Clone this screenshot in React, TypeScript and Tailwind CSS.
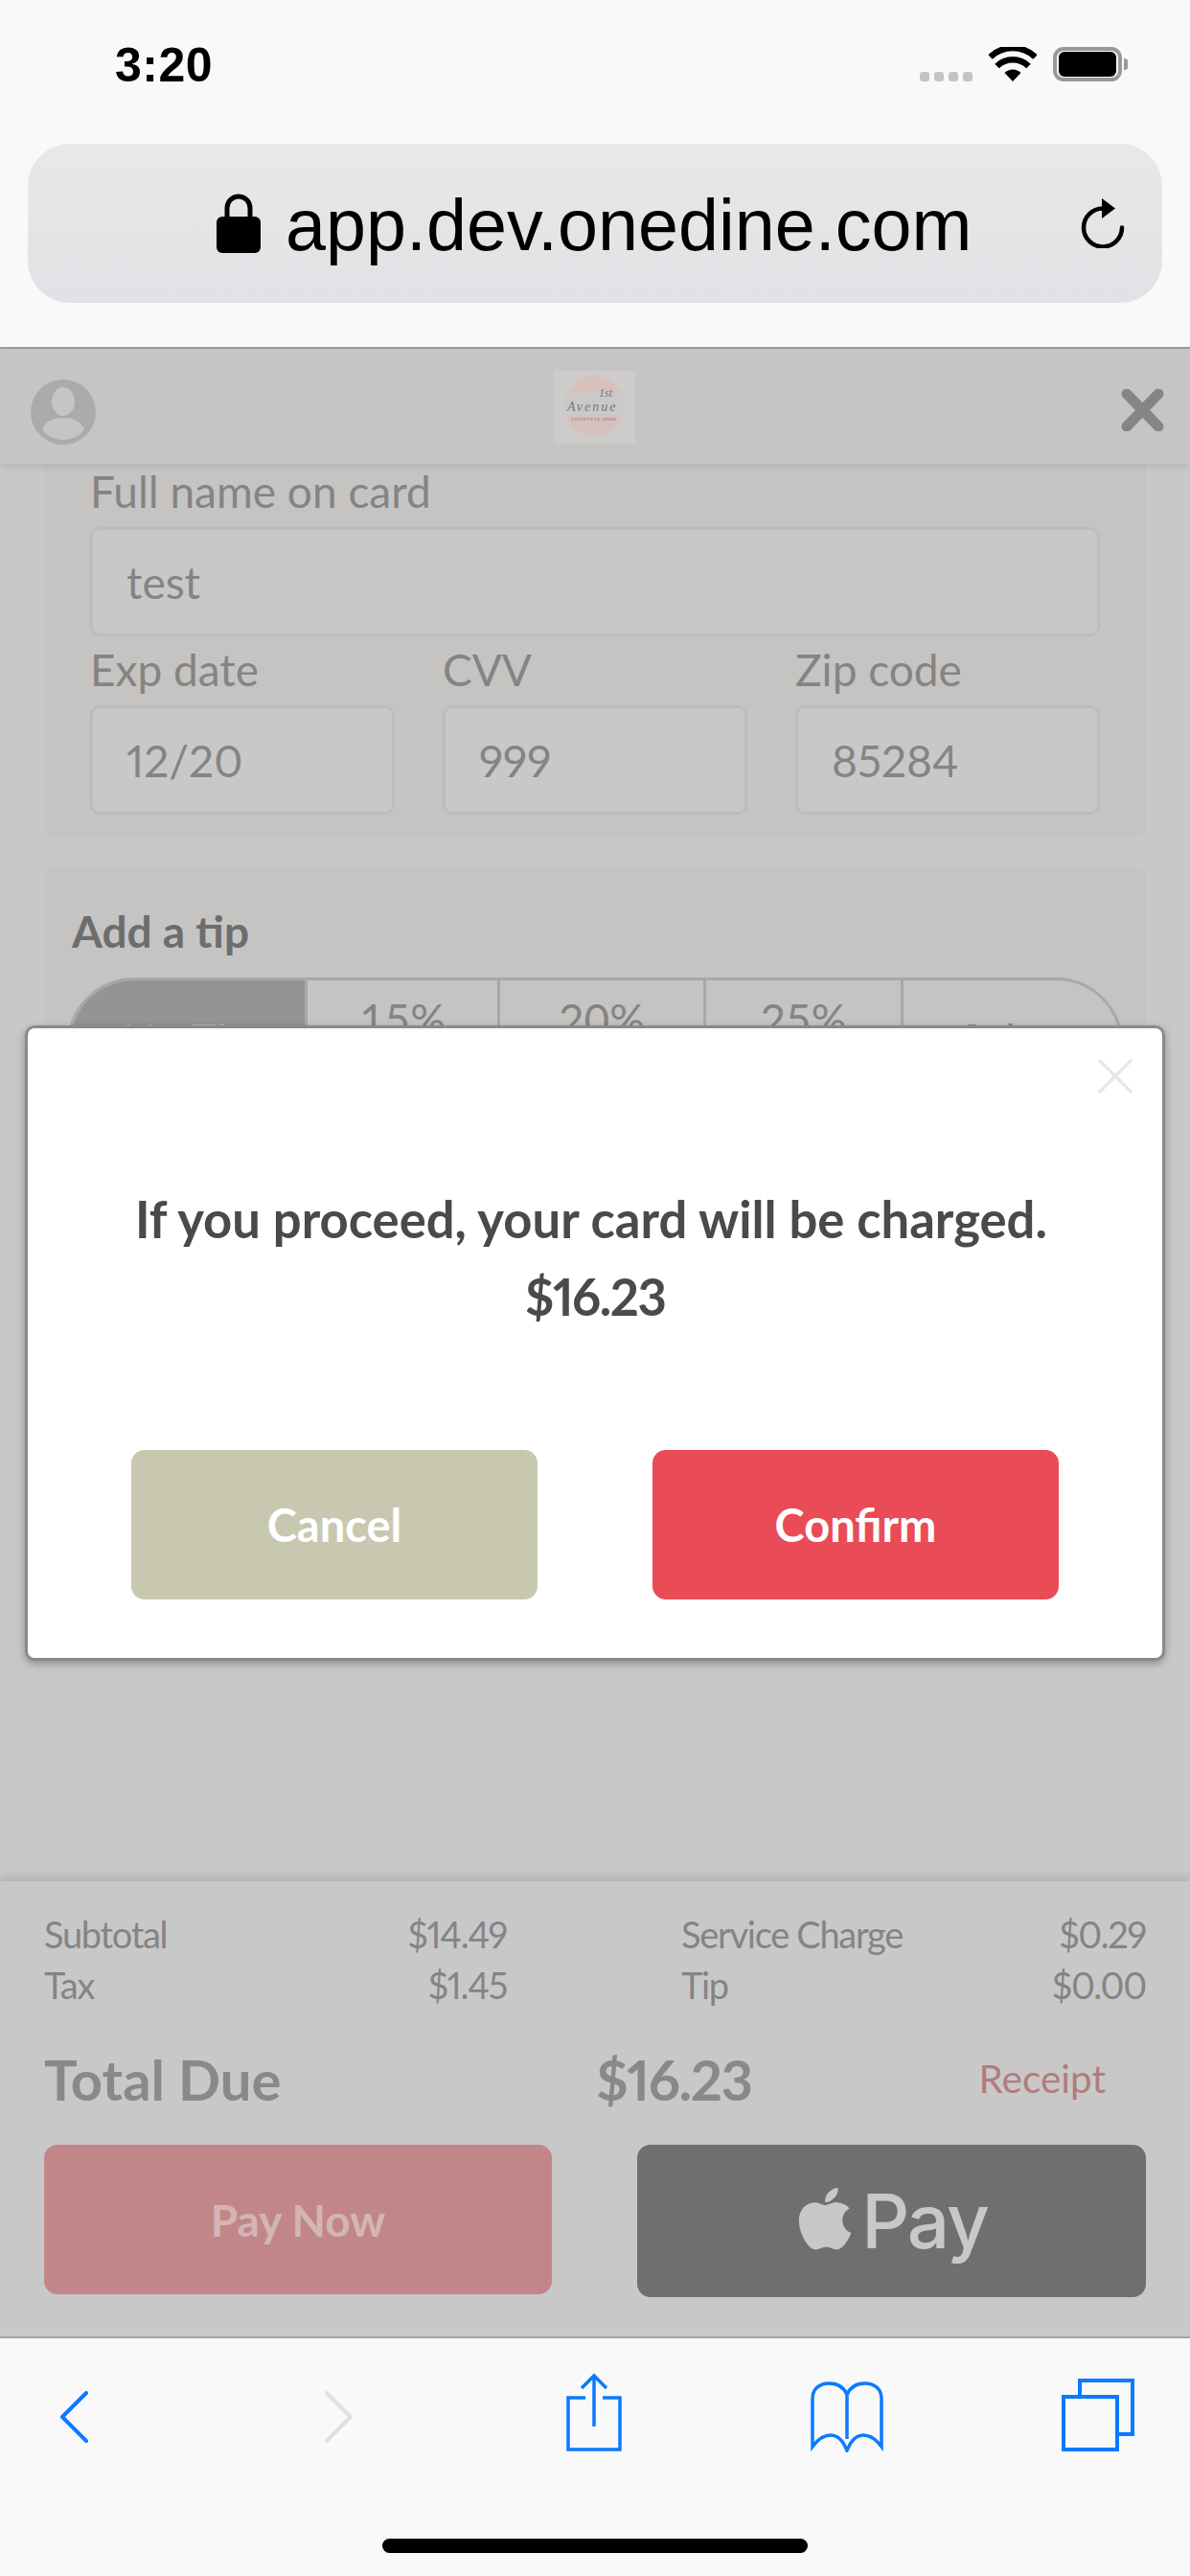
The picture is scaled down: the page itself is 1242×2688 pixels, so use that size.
import { FaApple } from "react-icons/fa";

const appFont = "font-['Lato','Open_Sans',sans-serif]";

function StatusIcons() {
  return (
    <div className="flex items-start">
      {/* signal */}
      <div className="mt-[26px] flex gap-[5px]">
        <div className="h-[10px] w-[10px] rounded-[3px] bg-[#c4c4c4]" />
        <div className="h-[10px] w-[10px] rounded-[3px] bg-[#c4c4c4]" />
        <div className="h-[10px] w-[10px] rounded-[3px] bg-[#c4c4c4]" />
        <div className="h-[10px] w-[10px] rounded-[3px] bg-[#c4c4c4]" />
      </div>
      <svg className="ml-[17px]" width="50" height="36" viewBox="0 0 50 36">
        <path d="M25 36 16.5 27a12 12 0 0 1 17 0Z" fill="#000" />
        <path d="M8.5 20a23.5 23.5 0 0 1 33 0" fill="none" stroke="#000" strokeWidth="6.5" />
        <path d="M1.5 11.5a34 34 0 0 1 47 0" fill="none" stroke="#000" strokeWidth="6.5" transform="translate(0 -1)" />
      </svg>
      <div className="ml-[17px] flex items-center">
        <div className="flex h-[36px] w-[72px] items-center justify-center rounded-[11px] border-[4px] border-[#999999]">
          <div className="h-[26px] w-[60px] rounded-[6px] bg-black" />
        </div>
        <div className="ml-[2px] h-[12px] w-[4px] rounded-r-[3px] bg-[#999999]" />
      </div>
    </div>
  );
}

function LockIcon() {
  return (
    <svg width="46" height="62" viewBox="0 0 46 62">
      <path d="M11 28V15a12 12 0 0 1 24 0v13" fill="none" stroke="#000" strokeWidth="5" />
      <rect x="0" y="24" width="46" height="38" rx="6" fill="#000" />
    </svg>
  );
}

function ReloadIcon() {
  return (
    <svg width="46" height="52" viewBox="0 0 46 52">
      <path d="M23 10.500a20 20 0 1 0 20 20" fill="none" stroke="#000" strokeWidth="4.500" strokeLinecap="round" />
      <path d="M22 0 36 10.500 22 21Z" fill="#000" />
    </svg>
  );
}

function SafariBar() {
  return (
    <div className="h-[364px] w-full shrink-0 border-b-2 border-[#9c9b99] bg-[#f9f9f9]">
      <div className="flex h-[150px] items-start justify-between pl-[120px] pr-[65px] pt-[49px]">
        <span className="font-['Liberation_Sans',sans-serif] text-[50px] leading-[38px] font-bold tracking-[0.5px] text-black">3:20</span>
        <StatusIcons />
      </div>
      <div className="mx-[29px] flex h-[166px] items-center rounded-[44px] bg-gradient-to-b from-[#e7e8e8] to-[#e1e2e5] pl-[197px] pr-[39px]">
        <LockIcon />
        <span className="ml-[26px] mt-[6px] font-['Liberation_Sans',sans-serif] text-[75.5px] leading-none text-black">app.dev.onedine.com</span>
        <div className="ml-auto">
          <ReloadIcon />
        </div>
      </div>
    </div>
  );
}

function AppHeader() {
  return (
    <div className="relative z-10 flex h-[120px] w-full shrink-0 items-center justify-between bg-[#c6c5c3] pl-[32px] pr-[27px] shadow-[0_4px_6px_rgba(0,0,0,0.08)]">
      <svg className="mt-[12px]" width="68" height="70" viewBox="0 0 68 70">
        <circle cx="34" cy="35" r="34" fill="#acabab" />
        <ellipse cx="34" cy="24" rx="12" ry="15" fill="#c6c5c3" />
        <path d="M12 53c4-9 12-12 22-12s18 3 22 12c-5 7-13 11-22 11S17 60 12 53Z" fill="#c6c5c3" />
      </svg>
      <svg width="85" height="76" viewBox="0 0 85 76" className="absolute left-[578px] top-[23px]">
        <rect width="85" height="76" fill="#cdcccb" />
        <circle cx="42" cy="37" r="31.500" fill="#d6c1bd" />
        <rect x="10.500" y="23" width="63" height="23" fill="#cbc9c8" />
        <text x="47" y="27" fontFamily="Liberation Serif" fontStyle="italic" fontSize="12" fill="#6f7983">1st</text>
        <text x="14" y="42" fontFamily="Liberation Serif" fontStyle="italic" fontSize="14" letterSpacing="2" fill="#6f7983">Avenue</text>
        <text x="42" y="52" textAnchor="middle" fontFamily="Liberation Serif" fontSize="5" letterSpacing="0.500" fill="#8f6e6a">LIFESTYLE SHOP</text>
      </svg>
      <svg className="mt-[8px]" width="45" height="44" viewBox="0 0 45 44">
        <path d="M6 5 39 39M39 5 6 39" fill="none" stroke="#868585" strokeWidth="11" strokeLinecap="round" />
      </svg>
    </div>
  );
}

function Field({ label, value }: { label: string; value: string }) {
  return (
    <div className="flex flex-col">
      <div className="h-[50px] text-[46px] leading-[50px] text-[#858484]">{label}</div>
      <div className="mt-[12px] flex h-[114px] items-center rounded-[10px] border-[3px] border-[#bdbcbd] bg-[#c9c8c9] pl-[35px] text-[46px] text-[#858484] proportional-nums">
        {value}
      </div>
    </div>
  );
}

function TipBar() {
  return (
    <div className="mt-[20px] flex h-[120px] overflow-hidden rounded-t-[70px] border-[3px] border-[#a9a8a8] text-center text-[46px] leading-[52px] text-[#858484]">
      <div className="w-[245px] bg-[#959494] pt-[36px] text-[#b5b4b4]">No Tip</div>
      <div className="w-[201px] border-l-[3px] border-[#a9a8a8] pt-[15px]">15%</div>
      <div className="w-[215px] border-l-[3px] border-[#a9a8a8] pt-[15px]">20%</div>
      <div className="w-[206px] border-l-[3px] border-[#a9a8a8] pt-[15px]">25%</div>
      <div className="flex-1 border-l-[3px] border-[#a9a8a8] pt-[36px]">Other</div>
    </div>
  );
}

function Page() {
  return (
    <div className="min-h-0 flex-1 overflow-hidden bg-[#c9c8c9] px-[46px]">
      <div className="rounded-b-[12px] bg-[#c5c4c2] px-[48px] pb-[24px] pt-[4px]">
        <Field label="Full name on card" value="test" />
        <div className="mt-[10px] grid grid-cols-3 gap-[50px]">
          <Field label="Exp date" value="12/20" />
          <Field label="CVV" value="999" />
          <Field label="Zip code" value="85284" />
        </div>
      </div>
      <div className="mt-[30px] h-[400px] rounded-[12px] bg-[#c5c4c2] px-[24px] pt-[40px]">
        <div className="pl-[5px] text-[46px] leading-[56px] font-bold text-[#6e6d6d]">Add a tip</div>
        <TipBar />
      </div>
    </div>
  );
}

function ConfirmModal() {
  return (
    <div className="absolute left-[26px] top-[1070px] z-20 h-[663px] w-[1190px] rounded-[10px] border-[3px] border-[#8a8a8a] bg-white shadow-[0_3px_8px_rgba(0,0,0,0.3)]">
      <svg className="absolute right-[31px] top-[32px]" width="36" height="36" viewBox="0 0 36 36">
        <path d="M2 2 34 34M34 2 2 34" fill="none" stroke="#e8e6ea" strokeWidth="3.500" strokeLinecap="round" />
      </svg>
      <div className="pt-[158px] text-center text-[52.6px] leading-[81px] font-bold text-[#4a4a4a]">
        <div className="pr-[8px]">If you proceed, your card will be charged.</div>
        <div className="tracking-[-1.5px] proportional-nums">$16.23</div>
      </div>
      <div className="mt-[120px] flex justify-between px-[108px]">
        <button className="h-[156px] w-[424px] rounded-[14px] bg-[#c8c8b0] text-[47px] font-bold text-white">Cancel</button>
        <button className="h-[156px] w-[424px] rounded-[14px] bg-[#e94b57] text-[47px] font-bold text-white">Confirm</button>
      </div>
    </div>
  );
}

function Amount({ label, value }: { label: string; value: string }) {
  return (
    <div className="flex h-[53px] items-center justify-between text-[38px] tracking-[-1.3px] text-[#858484] proportional-nums">
      <span>{label}</span>
      <span>{value}</span>
    </div>
  );
}

function Footer() {
  return (
    <div className="relative z-10 h-[475px] w-full shrink-0 bg-[#c9c8c9] px-[46px] pt-[29px] shadow-[0_-5px_8px_rgba(0,0,0,0.1)]">
      <div className="flex">
        <div className="w-[483px]">
          <Amount label="Subtotal" value="$14.49" />
          <Amount label="Tax" value="$1.45" />
        </div>
        <div className="ml-[182px] flex-1">
          <Amount label="Service Charge" value="$0.29" />
          <Amount label="Tip" value="$0.00" />
        </div>
      </div>
      <div className="mt-[36px] flex h-[70px] items-center">
        <span className="w-[576px] text-[58px] font-bold text-[#8a8989]">Total Due</span>
        <span className="text-[58px] font-bold tracking-[-1.5px] text-[#8a8989] proportional-nums">$16.23</span>
        <span className="ml-auto mr-[42px] text-[40.5px] text-[#b37c7c]">Receipt</span>
      </div>
      <div className="mt-[34px] flex items-start justify-between">
        <button className="h-[156px] w-[530px] rounded-[14px] bg-[#c28689] text-[46px] font-bold text-[#d3b5b5]">Pay Now</button>
        <button className="flex h-[159px] w-[531px] items-center justify-center rounded-[14px] bg-[#706e6f] pr-[6px] text-[#c9c8c9]">
          <FaApple className="mb-[6px] text-[74px]" />
          <span className="ml-[1px] font-['Inter',sans-serif] text-[78px] leading-none font-medium tracking-[-2px]">Pay</span>
        </button>
      </div>
    </div>
  );
}

function Toolbar() {
  const blue = "#0a7aff";
  return (
    <div className="relative h-[250px] w-full shrink-0 border-t-2 border-[#a5a5a5] bg-[#f9f9f9]">
      <div className="flex items-start pl-[62px]">
        <svg className="mt-[55px]" width="30" height="54" viewBox="0 0 30 54">
          <path d="M28 2 3 27 28 52" fill="none" stroke={blue} strokeWidth="4" strokeLinecap="round" strokeLinejoin="round" />
        </svg>
        <svg className="ml-[247px] mt-[55px]" width="30" height="54" viewBox="0 0 30 54">
          <path d="M2 2 27 27 2 52" fill="none" stroke="#e0e0e0" strokeWidth="4" strokeLinecap="round" strokeLinejoin="round" />
        </svg>
        <svg className="ml-[222px] mt-[36px]" width="58" height="82" viewBox="0 0 58 82">
          <path d="M20 26H2V80H56V26H38" fill="none" stroke={blue} strokeWidth="3.500" />
          <path d="M29 56V3M16 16 29 3 42 16" fill="none" stroke={blue} strokeWidth="3.500" />
        </svg>
        <svg className="ml-[197px] mt-[45px]" width="76" height="74" viewBox="0 0 76 74">
          <path d="M38 14C35 6 28 2 19 2 9 2 2 8 2 18V68C8 60 14 56 21 56 28 56 34 62 38 72 42 62 48 56 55 56 62 56 68 60 74 68V18C74 8 67 2 57 2 48 2 41 6 38 14ZM38 14V60" fill="none" stroke={blue} strokeWidth="3.500" />
        </svg>
        <svg className="ml-[186px] mt-[42px]" width="76" height="76" viewBox="0 0 76 76">
          <path d="M19 17V2H74V58H58" fill="none" stroke={blue} strokeWidth="4" />
          <rect x="2" y="19" width="56" height="55" fill="none" stroke={blue} strokeWidth="4" />
        </svg>
      </div>
      <div className="absolute left-[399px] top-[209px] h-[15px] w-[444px] rounded-full bg-black" />
    </div>
  );
}

export default function App() {
  return (
    <div className={`relative flex h-[2688px] w-[1242px] flex-col overflow-hidden ${appFont}`}>
      <SafariBar />
      <AppHeader />
      <Page />
      <Footer />
      <Toolbar />
      <ConfirmModal />
    </div>
  );
}
